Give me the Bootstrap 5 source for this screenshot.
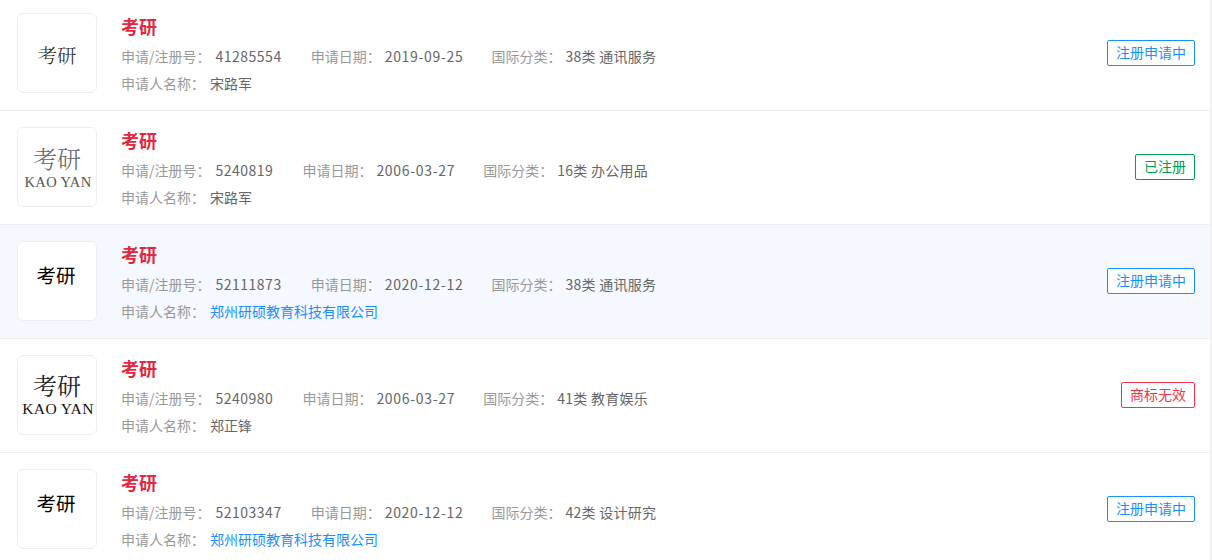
<!DOCTYPE html>
<html lang="zh">
<head>
<meta charset="utf-8">
<title>考研</title>
<link href="https://cdn.jsdelivr.net/npm/bootstrap@5.3.0/dist/css/bootstrap.min.css" rel="stylesheet">
<style>
html,body{height:560px;overflow:hidden;background:#fff}
body{font-family:"Noto Sans CJK SC","Liberation Sans",sans-serif;font-size:14px;color:#666}
.tm-wrap{border-right:2px solid #f1f1f1;width:1212px}
.tm-list{margin-top:-3px}
.tm-row{height:114px;border-bottom:1px solid #eee;padding:16px 15px 0 17px}
.tm-row.tm-hover{background:#f5f8fe}
.tm-logo{width:80px;height:80px;border:1px solid #eee;border-radius:6px;background:#fff;flex:none;line-height:1;color:#222;margin-right:24px;font-family:"Noto Serif CJK SC","Noto Sans CJK SC",serif;text-align:center}
.tm-t1{font-size:19.5px;font-weight:300;padding-top:6px}
.tm-t2{font-size:24px;font-weight:300;color:#666;line-height:24px;margin-top:2px;margin-bottom:5px}
.tm-t3{font-family:"Noto Sans CJK SC",sans-serif;font-size:19.5px;font-weight:400;color:#000;padding-bottom:12px;padding-right:2px}
.tm-t4{font-size:24px;font-weight:400;color:#222;line-height:24px;margin-top:-2px;margin-bottom:4px}
.tm-en{font-family:"Liberation Serif",serif;font-size:14.5px;line-height:15px;letter-spacing:.4px;color:#555;white-space:nowrap;padding-left:2px}
.tm-en.tm-dark{font-size:15.5px;color:#111;letter-spacing:.4px}
.tm-title{font-size:18px;font-weight:700;color:#e4273f;line-height:20px;margin-bottom:10px;margin-top:3px}
.tm-meta{line-height:20px;height:20px;margin-bottom:7px;white-space:nowrap;color:#666}
.tm-k{color:#999}
.tm-v{margin-left:4px;margin-right:30px}
.tm-num{letter-spacing:.5px;margin-left:5px;margin-right:29px}
.tm-name{margin-left:5px}
.tm-date{letter-spacing:.7px;margin-right:28px}
.tm-cls{letter-spacing:.25px}
.tm-a{color:#1890ff}
.tm-tag{font-size:14px;line-height:22px;height:26px;padding:0 8px;border:1px solid;border-radius:2px;background:#fff;margin-top:27px;white-space:nowrap}
.tm-blue{color:#1890ff;border-color:#1890ff}
.tm-green{color:#00a050;border-color:#00a050}
.tm-red{color:#f5334f;border-color:#f5334f}
</style>
</head>
<body>
<div class="tm-wrap">
<div class="tm-list">
  <div class="tm-row d-flex align-items-start">
    <div class="tm-logo d-flex align-items-center justify-content-center"><span class="tm-t1">考研</span></div>
    <div class="flex-grow-1">
      <div class="tm-title">考研</div>
      <div class="tm-meta"><span class="tm-k">申请/注册号：</span><span class="tm-v tm-num">41285554</span><span class="tm-k">申请日期：</span><span class="tm-v tm-date">2019-09-25</span><span class="tm-k">国际分类：</span><span class="tm-v tm-cls">38类 通讯服务</span></div>
      <div class="tm-meta"><span class="tm-k">申请人名称：</span><span class="tm-v tm-name">宋路军</span></div>
    </div>
    <span class="tm-tag tm-blue">注册申请中</span>
  </div>
  <div class="tm-row d-flex align-items-start">
    <div class="tm-logo d-flex flex-column align-items-center justify-content-center"><span class="tm-t2">考研</span><span class="tm-en">KAO YAN</span></div>
    <div class="flex-grow-1">
      <div class="tm-title">考研</div>
      <div class="tm-meta"><span class="tm-k">申请/注册号：</span><span class="tm-v tm-num">5240819</span><span class="tm-k">申请日期：</span><span class="tm-v tm-date">2006-03-27</span><span class="tm-k">国际分类：</span><span class="tm-v tm-cls">16类 办公用品</span></div>
      <div class="tm-meta"><span class="tm-k">申请人名称：</span><span class="tm-v tm-name">宋路军</span></div>
    </div>
    <span class="tm-tag tm-green">已注册</span>
  </div>
  <div class="tm-row tm-hover d-flex align-items-start">
    <div class="tm-logo d-flex align-items-center justify-content-center"><span class="tm-t3">考研</span></div>
    <div class="flex-grow-1">
      <div class="tm-title">考研</div>
      <div class="tm-meta"><span class="tm-k">申请/注册号：</span><span class="tm-v tm-num">52111873</span><span class="tm-k">申请日期：</span><span class="tm-v tm-date">2020-12-12</span><span class="tm-k">国际分类：</span><span class="tm-v tm-cls">38类 通讯服务</span></div>
      <div class="tm-meta"><span class="tm-k">申请人名称：</span><span class="tm-v tm-name tm-a">郑州研硕教育科技有限公司</span></div>
    </div>
    <span class="tm-tag tm-blue">注册申请中</span>
  </div>
  <div class="tm-row d-flex align-items-start">
    <div class="tm-logo d-flex flex-column align-items-center justify-content-center"><span class="tm-t4">考研</span><span class="tm-en tm-dark">KAO YAN</span></div>
    <div class="flex-grow-1">
      <div class="tm-title">考研</div>
      <div class="tm-meta"><span class="tm-k">申请/注册号：</span><span class="tm-v tm-num">5240980</span><span class="tm-k">申请日期：</span><span class="tm-v tm-date">2006-03-27</span><span class="tm-k">国际分类：</span><span class="tm-v tm-cls">41类 教育娱乐</span></div>
      <div class="tm-meta"><span class="tm-k">申请人名称：</span><span class="tm-v tm-name">郑正锋</span></div>
    </div>
    <span class="tm-tag tm-red">商标无效</span>
  </div>
  <div class="tm-row d-flex align-items-start">
    <div class="tm-logo d-flex align-items-center justify-content-center"><span class="tm-t3">考研</span></div>
    <div class="flex-grow-1">
      <div class="tm-title">考研</div>
      <div class="tm-meta"><span class="tm-k">申请/注册号：</span><span class="tm-v tm-num">52103347</span><span class="tm-k">申请日期：</span><span class="tm-v tm-date">2020-12-12</span><span class="tm-k">国际分类：</span><span class="tm-v tm-cls">42类 设计研究</span></div>
      <div class="tm-meta"><span class="tm-k">申请人名称：</span><span class="tm-v tm-name tm-a">郑州研硕教育科技有限公司</span></div>
    </div>
    <span class="tm-tag tm-blue">注册申请中</span>
  </div>
</div>
</div>
<script src="https://cdn.jsdelivr.net/npm/bootstrap@5.3.0/dist/js/bootstrap.bundle.min.js"></script>
</body>
</html>
